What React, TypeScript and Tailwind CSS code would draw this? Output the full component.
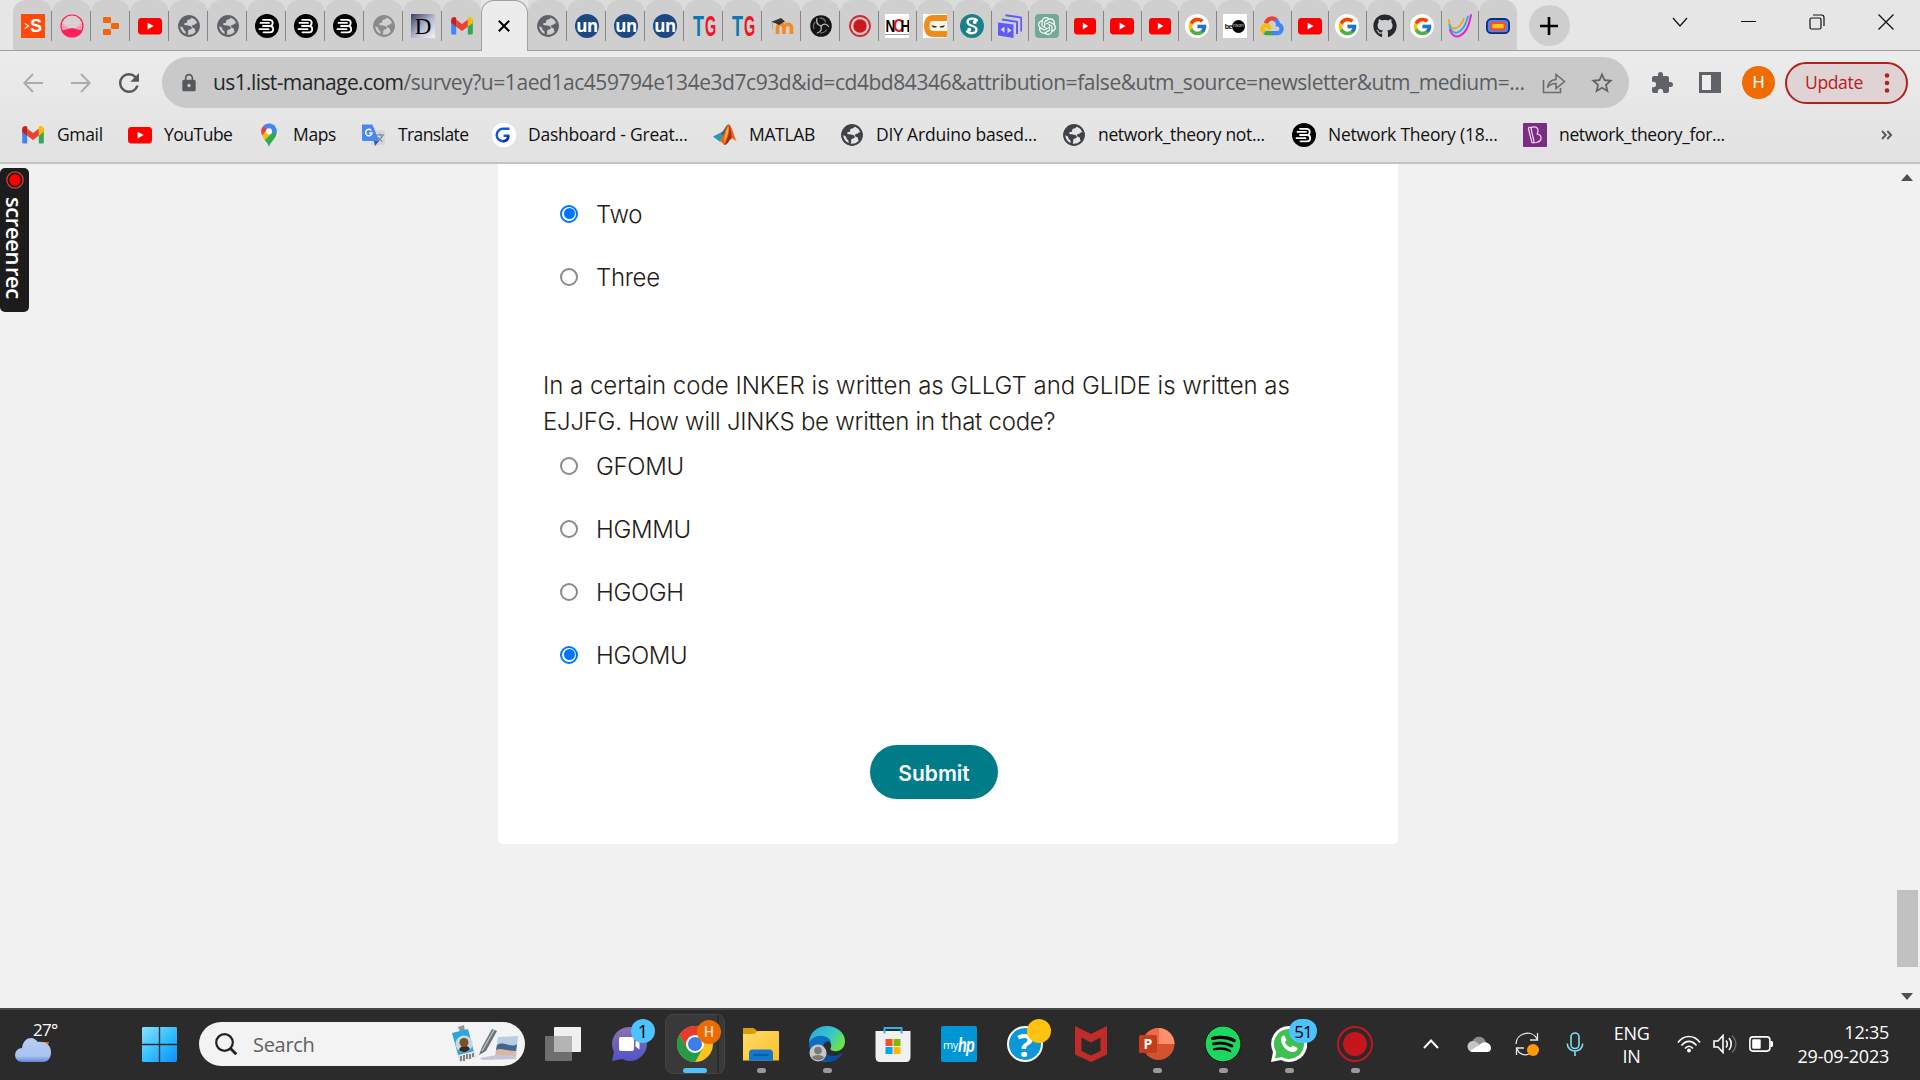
import React from 'react';
import { MdExtension, MdLock, MdRefresh, MdStarBorder } from 'react-icons/md';
import { FaGithub, FaSpotify } from 'react-icons/fa';
import { FcGoogle } from 'react-icons/fc';
import { SiOpenai } from 'react-icons/si';

const UI = "font-['Open_Sans','Noto_Sans',sans-serif]";

/* ---------- favicons ---------- */

const Gmail = () => (
  <svg viewBox="0 0 24 24" className="size-6">
    <path d="M1.200 5.500v13.700c0 .8.6 1.400 1.400 1.400h3.600V10.500z" fill="#4285f4" />
    <path d="M22.800 5.500v13.700c0 .8-.6 1.400-1.400 1.400h-3.600V10.500z" fill="#34a853" />
    <path d="M17.800 6v6.800l5-3.800V6.200c0-2.600-2.900-4-5-2.500z" fill="#fbbc04" />
    <path d="M6.200 12.800V5.600L12 10l5.800-4.400v7.200L12 17.100z" fill="#ea4335" />
    <path d="M1.200 6.200V9l5 3.800V3.700c-2.100-1.500-5-.1-5 2.500z" fill="#c5221f" />
  </svg>
);
const YouTube = ({ small = false }: { small?: boolean }) => (
  <svg viewBox="0 0 24 24" className={small ? 'h-6 w-[22px]' : 'size-6'} preserveAspectRatio="none">
    <rect x="0" y="4" width="24" height="16.400" rx="3.400" fill="#f00" />
    <path d="M9.600 8.800v6.600l6-3.300z" fill="#fff" />
  </svg>
);
const Globe = ({ color = '#5f6368', land = '#cfcfcf' }: { color?: string; land?: string }) => (
  <svg viewBox="0 0 24 24" className="size-6">
    <circle cx="12" cy="12" r="10.700" fill={color} />
    <path
      d="M14.500 2.800c.3 1.500-.8 2.500-2.400 2.700-1.800.2-2 1.100-1.900 2.100.1 1.200-.8 1.500-1.900 1.500-1.200 0-1.500 1.300-.6 2 .8.700 2.700.5 4.300.6 1.900.1 2.800.9 2.800 2.200 0 1.100-.8 1.300-1.900 1.500-1.400.2-1.700 1-1.700 2.100 0 1.400.1 2.500-1 3.300 3.400 1.300 8 .2 10-3.300-1.400.4-2.300-.4-2.200-1.800.1-1.200-.6-1.600-1.500-1.800-1.500-.4-2-1.700-1-2.600.7-.7 1.900-.3 2.500-1.100.6-.9 1.300-1 2.500-.7-1-3.200-3-5.700-6-6.700z"
      fill={land}
    />
    <path d="M2.800 12.200c.2 3.600 2.200 6.500 5.600 8 .5-1.700.2-2.900-1-3.600-1.300-.8-.6-2.300-1.600-3.100-.7-.6-1.700-1-3-1.300z" fill={land} />
    <circle cx="12" cy="12" r="9.800" fill="none" stroke={color} strokeWidth="1.900" />
  </svg>
);
const SIcon = () => (
  <div className="flex size-6 items-center justify-center bg-[#ff4a0c] text-white">
    <svg viewBox="0 0 8 10" className="h-2.5 w-1.5" fill="none" stroke="#fff" strokeWidth="1.600"><path d="M1 1.500 6 5 1 8.500" /></svg>
    <span className="font-['Liberation_Sans'] text-[18px] leading-none font-bold">S</span>
  </div>
);
const PinkBall = () => (
  <svg viewBox="0 0 24 24" className="size-6">
    <circle cx="12" cy="12" r="11" fill="#f9a3b6" />
    <path d="M1.500 9C3 4 7 1 12 1s9 3 10.500 8L12 15.500z" fill="#dad0d2" />
    <path d="M1.500 16.500 12 14l10.500 2.500C21 20.500 17 23 12 23S3 20.500 1.500 16.500z" fill="#ff2157" />
    <circle cx="12" cy="12" r="11" fill="none" stroke="#ff2157" strokeWidth="1.200" />
  </svg>
);
const Replit = () => (
  <svg viewBox="0 0 24 24" className="size-6" fill="#f5670f">
    <rect x="4" y="3" width="8" height="6" rx="1" /><rect x="12" y="9" width="8" height="6" rx="1" /><rect x="4" y="15" width="8" height="6" rx="1" />
  </svg>
);
const Bar3 = () => (
  <svg viewBox="0 0 24 24" className="size-6">
    <circle cx="12" cy="12" r="12" fill="#000" />
    <g fill="none" stroke="#fff" strokeWidth="1.800" strokeLinecap="round">
      <path d="M8 5.800h6.500c2.200 0 3.200 1.200 3.200 3 0 1.500-.8 2.800-2.200 3.200 2 .4 2.700 1.700 2.700 3.200 0 2-1.300 3.100-3.400 3.100H8.500" />
      <path d="M5.500 8.900h8.500M8 12h7M4.500 15.200h9" />
    </g>
  </svg>
);
const DSerif = () => (
  <div className="flex size-6 items-center justify-center bg-linear-to-br from-[#3b4268] via-[#b3b4ca] to-[#f6f6fa] font-['Liberation_Serif'] text-[23px] leading-none text-black">D</div>
);
const Un = () => (
  <div className="flex size-6 items-center justify-center rounded-full bg-[#1d4880] pb-0.5 font-['Open_Sans'] text-[17px] leading-none font-bold tracking-[-0.500px] text-white">un</div>
);
const TG = () => (
  <div className="flex size-6 items-center justify-center">
    <div className="flex scale-y-[1.650] gap-px font-['Liberation_Sans'] text-[18px] leading-none font-bold">
      <span className="w-[11px] text-[#0e78ac]">T</span><span className="w-2.5 origin-left scale-x-[.8] text-[#f01525]">G</span>
    </div>
  </div>
);
const Moodle = () => (
  <svg viewBox="0 0 24 24" className="size-6">
    <path d="M7.500 20v-6c0-5 6.500-5 6.500 0v6M14 14c0-5 7.500-5 7.500 0v6" fill="none" stroke="#f98012" strokeWidth="3.600" opacity=".9" />
    <path d="M1 8 11 4l4 3.500-6 3.500-4-2z" fill="#333" /><path d="M2.500 8v7" stroke="#c9a878" strokeWidth="1" />
  </svg>
);
const Obs = () => (
  <svg viewBox="0 0 24 24" className="size-6">
    <circle cx="12" cy="12" r="10.800" fill="#141414" />
    <g fill="none" stroke="#b5b5b5" strokeWidth="1.300" strokeLinecap="round">
      <path d="M8 4.500c-1 3.500.5 6.500 4 7.500" /><path d="M12 12c2.500-2.600 5.500-2.300 7.500.3" /><path d="M12 12c1 3.500-.6 6-3.700 7" />
      <path d="M11 4c2.500 0 4.800 1.500 5.500 4M17.500 16c-1.300 2-3.500 3-6 2.800M5 14.500C4 12.500 4.500 10 6 8.300" opacity=".55" />
    </g>
  </svg>
);
const RecSmall = () => (
  <svg viewBox="0 0 24 24" className="size-6"><circle cx="12" cy="12" r="10" fill="#e3c5c5" stroke="#d02a30" strokeWidth="1.800" /><circle cx="12" cy="12" r="6.700" fill="#cb181f" /></svg>
);
const Nch = () => (
  <div className="flex size-6 flex-col items-center justify-center overflow-hidden bg-white">
    <div className="flex h-[18px] items-center border-b border-gray-400 font-['Liberation_Sans'] text-[15px] leading-none font-black">
      <span className="w-2 scale-x-90 scale-y-110 text-black">N</span><span className="w-[7px] scale-y-125 text-[#e0182c]">C</span><span className="w-[9px] scale-x-90 scale-y-110 text-black">H</span>
    </div>
  </div>
);
const Ninja = () => (
  <svg viewBox="0 0 24 24" className="size-6">
    <rect width="24" height="24" fill="#fff" />
    <path d="M24 1H10C4 1 1 5 1 12s3 11 9 11h14v-6H12c-3 0-4-1.500-4-5s1-5 4-5h12z" fill="#ee8d1b" />
    <rect x="6.500" y="7" width="17.500" height="10" rx="4" fill="#fdf5e8" />
    <path d="M8.500 11.200l5.500 1.300-.8.900c-2 .6-4 0-4.700-2.200zM22 11.200l-5.500 1.300.8.900c2 .6 4 0 4.700-2.200z" fill="#222" />
  </svg>
);
const TealS = () => (
  <svg viewBox="0 0 24 24" className="size-6">
    <circle cx="12" cy="12" r="12" fill="#1c8088" />
    <path d="M17 6.300C14.500 3.500 7.500 4.200 7.500 8.300c0 4.200 9 2.700 9 7.200 0 4.200-7 4.800-9.500 2" fill="none" stroke="#fff" strokeWidth="2.300" strokeLinecap="round" />
    <circle cx="14.800" cy="8" r="2" fill="#fff" /><circle cx="9.200" cy="15.800" r="2" fill="#fff" />
  </svg>
);
const Cards = () => (
  <svg viewBox="0 0 24 24" className="size-6">
    <path d="M0 8.500 15.500 10.500V24L0 21.500z" fill="#5f5cf5" />
    <path d="M4 5.500 19 7.800V20M7.500 1.200 23.300 3.600V17.500" fill="none" stroke="#5f5cf5" strokeWidth="2" />
    <path d="M2.500 15.500 6.500 12.800v6zM13.500 16.500 9.500 13.300v6z" fill="#d9d9ef" />
  </svg>
);
const Gpt = () => (
  <div className="flex size-6 items-center justify-center rounded-[4px] bg-[#74a998]"><SiOpenai className="size-[18px] text-white" /></div>
);
const Google = () => (
  <div className="flex size-6 items-center justify-center rounded-full bg-white"><FcGoogle className="size-[21px]" /></div>
);
const Benson = () => (
  <div className="flex size-6 items-center justify-center bg-white">
    <span className="font-['Liberation_Sans'] text-[7px] leading-none font-bold tracking-[-0.500px] text-black">be</span>
    <div className="flex size-[13px] items-center justify-center overflow-hidden rounded-full bg-black font-['Liberation_Sans'] text-[5px] text-gray-300">nson</div>
  </div>
);
const Cloud = () => (
  <svg viewBox="0 0 24 24" className="size-6">
    <g fill="none" strokeWidth="4.200">
      <path d="M5.800 9.300C7.500 3.800 13.500 2.800 16.800 6.500" stroke="#ea4335" />
      <path d="M15.500 6c2 1.200 2.500 3 2.500 4.500 5 .5 4.800 8.700-.5 8.700H12" stroke="#4285f4" />
      <path d="M12.500 19.200H7c-1.300 0-2-.3-3-1" stroke="#34a853" />
      <path d="M9.800 15.500C8 9 1.500 12 2.600 16c.3 1.200.9 2 2 2.800" stroke="#fbbc04" />
    </g>
  </svg>
);
const UCurve = () => (
  <svg viewBox="0 0 24 24" className="size-6" fill="none" strokeWidth="1.900" strokeLinecap="round">
    <path d="M1 6c0 12 10 11 15-1.500" stroke="#f9a11b" /><path d="M1.500 11c1 11 13 12 18.500-8.500" stroke="#1bb0ee" /><path d="M2 16c3 11 17 9 21-15" stroke="#ee1fd0" />
  </svg>
);
const Chip = () => (
  <svg viewBox="0 0 24 24" className="size-6">
    <rect x=".9" y="5" width="22.200" height="14.200" rx="4.500" fill="#4a86f7" stroke="#0d2c6b" strokeWidth="1.800" />
    <rect x="5.300" y="8.800" width="13.400" height="6.600" rx="1.500" fill="#ffc021" stroke="#f5511e" strokeWidth="2.200" />
  </svg>
);
const MapPin = () => (
  <svg viewBox="0 0 24 24" className="size-6">
    <path d="M12 24c1-5 7.800-8.500 7.800-15.500L16 9l-8.500 8C10 19.500 11.300 21.500 12 24z" fill="#34a853" />
    <path d="M5.200 12.500c.6 1.800 1.500 3.200 2.600 4.700L16 7.500l-5.500-.5z" fill="#fbbc04" />
    <path d="M4.200 8.300c0 1.500.3 2.800 1 4.200L10.500 6 6 3.200C4.800 4.700 4.200 6.300 4.200 8.300z" fill="#ea4335" />
    <path d="M6 3.200 10.500 7 15 1C12 0 8 .5 6 3.200z" fill="#4285f4" /><path d="M15 1 9.700 7.300 15 10l4.800-1.500C19.800 5 18 2.200 15 1z" fill="#4285f4" />
    <circle cx="12" cy="8.200" r="3" fill="#fff" />
  </svg>
);
const Translate = () => (
  <svg viewBox="0 0 24 24" className="size-6 overflow-visible">
    <rect x="9" y="7" width="14" height="15" rx="1" fill="#d3d7db" />
    <path d="M14 12h8M18 10.500V12m2.500 0c-.8 3-3 5-5 6M15.500 14c1 2 3.500 4 5 4.500" stroke="#6b8594" strokeWidth="1.100" fill="none" />
    <path d="M0 1.500h10.500L17 18H1.500C.7 18 0 17.300 0 16.500z" fill="#4a87ee" /><path d="M12 18h5l-4 5z" fill="#3055b5" />
    <path d="M9.300 7.500A3.200 3.200 0 1 0 10 10H7.200" fill="none" stroke="#fff" strokeWidth="1.500" />
  </svg>
);
const GreatG = () => (
  <svg viewBox="0 0 24 24" className="size-6 overflow-visible">
    <circle cx="12" cy="12" r="12.200" fill="#fff" />
    <path d="M17.500 5.700H11a6 6 0 0 0 0 12.600c4 0 5.200-2.300 5.300-5.500H11.500" fill="none" stroke="#1558d6" strokeWidth="2.500" />
    <path d="M11 18.300c4 0 5.200-2.300 5.300-5.500" fill="none" stroke="#1530a5" strokeWidth="2.500" />
  </svg>
);
const Matlab = () => (
  <svg viewBox="0 0 24 24" className="size-6">
    <path d="M0 13.500 7 10l4 3.500-4.500 5z" fill="#2d9ab0" /><path d="M7 10c4-1 5-7 8.500-9L11 14z" fill="#4a5f78" />
    <path d="M15.500 1C13 4 12 11 6.500 18.500c2.500-.5 3.500 3 5 3.500 3.500-.5 4.500-5.500 7-6.500 1.500-.5 3.500 2 5 2.500C20.500 12 19 2.500 15.500 1z" fill="#e8641b" />
    <path d="M15.500 1c2 5 .5 12-4 21 3.500-.5 4.500-5.500 7-6.500C18.500 9 17.500 4 15.500 1z" fill="#a62a12" /><path d="M15.300 2.500c.8 5-.8 11-4.300 17 0-6 2.500-12 4.300-17z" fill="#fbb034" />
  </svg>
);
const PurpleB = () => (
  <svg viewBox="0 0 24 24" className="size-6">
    <rect width="24" height="24" rx="1" fill="#7b2d83" />
    <path d="M5.500 6c-.500-2 2-2.500 2.500-.700L11 18.500c.400 1.500-1.800 1.700-2.200.500zM8 5.300C8.500 4 12 3.300 13.500 4.500c2 1.600 1.600 4.600.500 6.500 3 .300 4.500 2.500 4 5-.500 2-2.500 3-4.500 3.500L9.500 20" fill="none" stroke="#f0d9f2" strokeWidth="1.200" strokeLinejoin="round" />
  </svg>
);

/* ---------- browser chrome ---------- */

const wideTabs = [
  <SIcon />, <PinkBall />, <Replit />, <YouTube />, <Globe />, <Globe />, <Bar3 />, <Bar3 />, <Bar3 />, <Globe color="#8a8a8a" />, <DSerif />, <Gmail />,
];
const midTabs = [<Globe />, <Un />, <Un />, <Un />, <TG />, <TG />, <Moodle />, <Obs />, <RecSmall />];
const narrowTabs = [
  <Nch />, <Ninja />, <TealS />, <Cards />, <Gpt />, <YouTube small />, <YouTube />, <YouTube small />, <Google />, <Benson />, <Cloud />, <YouTube />, <Google />,
  <FaGithub className="size-6 text-[#24292e]" />, <Google />, <UCurve />, <Chip />,
];

function Tab({ icon, narrow = false, last = false }: { icon: React.ReactNode; narrow?: boolean; last?: boolean }) {
  return (
    <div className={`${narrow ? 'w-[37.500px]' : 'w-[39px]'} flex h-[50px] shrink-0 items-start justify-center rounded-t-[13px] bg-[#cfcfcf] pt-[11px]`}>
      <div className={`flex h-[30px] w-full items-center justify-center ${narrow || last ? '' : 'pl-0.5'} ${last ? '' : 'border-r border-[#858585]'}`}>{icon}</div>
    </div>
  );
}

function TabStrip() {
  return (
    <div className="flex h-[51px] shrink-0 items-start border-b border-[#a0a0a0] bg-[#e6e6e6] pl-[13px]">
      <div className="flex rounded-tl-[13px] bg-[linear-gradient(to_bottom,#dcdcdc_0px,#dcdcdc_12px,#cfcfcf_13px)]">
        {wideTabs.map((t, i) => <Tab key={i} icon={t} last={i === 11} />)}
      </div>
      <div className="flex h-[51px] w-[47px] shrink-0 items-center justify-center rounded-t-[13px] border border-b-0 border-[#a0a0a0] bg-[#ececec] pr-px">
        <svg viewBox="0 0 12 12" className="size-3" stroke="#000" strokeWidth="2"><path d="M.8.8l10.400 10.400M11.200.8.8 11.200" /></svg>
      </div>
      <div className="flex rounded-tr-[13px] bg-[linear-gradient(to_bottom,#dcdcdc_0px,#dcdcdc_12px,#cfcfcf_13px)]">
        {midTabs.map((t, i) => <Tab key={i} icon={t} />)}
        {narrowTabs.map((t, i) => <Tab key={i} icon={t} narrow last={i === 16} />)}
      </div>
      <div className="mt-[5px] ml-3 flex size-[41px] items-center justify-center rounded-full bg-[#cecece]">
        <svg viewBox="0 0 18 18" className="size-[18px]" stroke="#000" strokeWidth="2.600"><path d="M9 0v18M0 9h18" /></svg>
      </div>
      <div className="ml-auto flex h-[43px] items-center pr-[26px]">
        <svg viewBox="0 0 16 16" className="mr-[53px] size-4" fill="none" stroke="#111" strokeWidth="1.200"><path d="M1 4l7 8 7-8" /></svg>
        <div className="mr-[53px] h-px w-[15px] bg-[#111]" />
        <svg viewBox="0 0 16 16" className="mr-[53px] size-4" fill="none" stroke="#111" strokeWidth="1.200"><rect x="1" y="4" width="11" height="11" rx="1.500" /><path d="M4 1h8.500C14 1 15 2 15 3.500V12" /></svg>
        <svg viewBox="0 0 16 16" className="size-4" stroke="#111" strokeWidth="1.300"><path d="M.5.5l15 15M15.500.5l-15 15" /></svg>
      </div>
    </div>
  );
}

const Arrow = ({ flip = false }: { flip?: boolean }) => (
  <svg viewBox="0 0 20 20" className={`size-5 ${flip ? '-scale-x-100' : ''}`} fill="none" stroke="#a9abad" strokeWidth="1.900"><path d="M20 10H1.500M10 1 1.300 10 10 19" /></svg>
);

function Toolbar() {
  return (
    <div className={`flex h-[62px] shrink-0 items-center bg-linear-to-b from-[#ececec] to-[#e6e6e6] pt-px pr-3 pl-[23px] ${UI}`}>
      <Arrow />
      <div className="ml-7"><Arrow flip /></div>
      <MdRefresh className="ml-[23px] size-[30px] text-[#55595d]" />
      <div className="ml-[18px] flex h-[51px] w-[1467px] items-center rounded-full bg-[#c9c9c9] pl-[17px]">
        <MdLock className="size-5 shrink-0 text-[#55595d]" />
        <span className="ml-3.5 w-[1326px] text-[21px] leading-none tracking-[-0.445px] whitespace-nowrap text-[#5a5d61]">
          <span className="tracking-[-0.600px] text-[#25282b]">us1.list-manage.com</span>/survey?u=1aed1ac459794e134e3d7c93d&amp;id=cd4bd84346&amp;attribution=false&amp;utm_source=newsletter&amp;utm_medium=...
        </span>
        <svg viewBox="0 0 24 24" className="ml-[3px] size-6 shrink-0" fill="none" stroke="#6a6d70" strokeWidth="1.600">
          <path d="M1.500 9v12.500h17V17" /><path d="M14 8.500V3.500l8.500 7-8.500 7v-5c-4 0-6.500 1-8.500 4 .5-4.500 3.500-7.500 8.500-8z" />
        </svg>
        <MdStarBorder className="ml-[23px] size-[26px] shrink-0 text-[#5f6368]" />
      </div>
      <MdExtension className="ml-[21px] size-6 text-[#5f6368]" />
      <svg viewBox="0 0 22 21" className="ml-[25px] h-[21px] w-[22px]"><path d="M0 0h22v21H0z" fill="#5f6368" /><path d="M3 3h9v15H3z" fill="#ececec" /></svg>
      <div className="ml-[21px] flex size-[33px] items-center justify-center rounded-full bg-[#f06c00] font-['Roboto'] text-[17px] text-white">H</div>
      <div className="ml-2.5 flex h-[42px] w-[123px] items-center rounded-full border-2 border-[#b3201f] bg-[#e0d3d3] pl-[18px] text-[17.500px] tracking-[-0.350px] text-[#b3201f]">
        Update
        <svg viewBox="0 0 6 20" className="ml-[21px] h-5 w-1.5" fill="#b3201f"><circle cx="3" cy="2.500" r="2.300" /><circle cx="3" cy="10" r="2.300" /><circle cx="3" cy="17.500" r="2.300" /></svg>
      </div>
    </div>
  );
}

const dark = { color: '#3f4347', land: '#e4e4e4' };
const bookmarks: [React.ReactNode, string, string, string][] = [
  [<Gmail />, 'Gmail', 'w-[107px]', ''],
  [<YouTube />, 'YouTube', 'w-[129px]', 'tracking-[-0.500px]'],
  [<MapPin />, 'Maps', 'w-[105px]', ''],
  [<Translate />, 'Translate', 'w-[130px]', 'tracking-[-0.600px]'],
  [<GreatG />, 'Dashboard - Great...', 'w-[221px]', 'tracking-[-0.250px]'],
  [<Matlab />, 'MATLAB', 'w-[127px]', ''],
  [<Globe {...dark} />, 'DIY Arduino based...', 'w-[222px]', 'tracking-[-0.200px]'],
  [<Globe {...dark} />, 'network_theory not...', 'w-[230px]', ''],
  [<Bar3 />, 'Network Theory (18...', 'w-[231px]', 'tracking-[-0.230px]'],
  [<PurpleB />, 'network_theory_for...', 'w-[230px]', ''],
];

function Bookmarks() {
  return (
    <div className={`flex h-[51px] shrink-0 items-center border-b-2 border-[#c4c4c4] bg-linear-to-b from-[#e6e6e6] to-[#e2e2e2] pb-[5px] pl-[21px] text-[17.500px] leading-none tracking-[-0.350px] whitespace-nowrap text-[#111] ${UI}`}>
      {bookmarks.map(([icon, label, w, tracking]) => (
        <div key={label} className={`${w} flex shrink-0 items-center gap-3`}>{icon}<span className={tracking}>{label}</span></div>
      ))}
      <svg viewBox="0 0 12 10" className="mr-[27px] ml-auto h-2.5 w-3" fill="none" stroke="#55595d" strokeWidth="1.900"><path d="M1 1l3.800 4L1 9M6.300 1l3.800 4-3.800 4" /></svg>
    </div>
  );
}

/* ---------- survey page ---------- */

function Option({ label, checked = false }: { label: string; checked?: boolean }) {
  return (
    <div className="flex h-[63px] items-center pl-[62px]">
      <span className={`flex size-[18px] items-center justify-center rounded-full border-2 bg-white ${checked ? 'border-[#0075ff]' : 'border-[#8a8a8a]'}`}>
        {checked && <span className="size-[11px] shrink-0 rounded-full bg-[#0075ff]" />}
      </span>
      <span className="ml-[18px] pt-0.5 text-[24px] leading-none tracking-[-0.350px]">{label}</span>
    </div>
  );
}

function Survey() {
  return (
    <div className="flex h-[844px] shrink-0 bg-[#f1f1f1]">
      <div className="w-[498px] shrink-0 pt-1">
        <div className="flex h-36 w-[29px] flex-col items-center rounded-[5px] bg-[#1c1c1c] pt-[3px]">
          <svg viewBox="0 0 18 18" className="size-[18px] shrink-0"><circle cx="9" cy="9" r="8.200" fill="none" stroke="#d93a3a" strokeWidth="1.300" /><circle cx="9" cy="9" r="5.700" fill="#f00" /></svg>
          <span className="mt-2 font-['Open_Sans'] text-[22px] leading-[22px] font-semibold tracking-[-0.400px] text-white [writing-mode:vertical-rl]">screen<span className="pt-0.5">rec</span></span>
        </div>
      </div>
      <div className="h-[680px] w-[900px] shrink-0 rounded-b-[5px] bg-white font-['Inter',sans-serif] font-[350] text-[#241c15]">
        <div className="pt-[18px]">
          <Option label="Two" checked />
          <Option label="Three" />
        </div>
        <p className="mt-[60px] mb-[-6px] pl-[45px] text-[24px] leading-9 tracking-[-0.040px] whitespace-nowrap">
          In a certain code INKER is written as GLLGT and GLIDE is written as<br />
          <span className="tracking-[-0.250px]">EJJFG. How will JINKS be written in that code?</span>
        </p>
        <Option label="GFOMU" />
        <Option label="HGMMU" />
        <Option label="HGOGH" />
        <Option label="HGOMU" checked />
        <button className="mt-[59px] ml-[372px] flex h-[54px] w-32 items-center justify-center rounded-full bg-[#007c89] pt-1 text-[21px] font-semibold text-white">Submit</button>
      </div>
      <div className="ml-auto flex w-[25px] flex-col items-center pt-2.5 pr-0.5 pb-2 pl-px">
        <svg viewBox="0 0 12 7" className="h-[7px] w-3"><path d="M0 7l6-7 6 7z" fill="#505050" /></svg>
        <div className="mt-auto h-[77px] w-[21px] bg-[#c1c1c1]" />
        <svg viewBox="0 0 12 7" className="mt-[26px] h-[7px] w-3"><path d="M0 0l6 7 6-7z" fill="#505050" /></svg>
      </div>
    </div>
  );
}

/* ---------- taskbar ---------- */

const SearchArt = () => (
  <svg viewBox="0 0 66 38" className="h-[38px] w-[66px]">
    <path d="M6 2l6-2 1 6-5 1z" fill="#8b96a0" />
    <path d="M0 8l16-4 7 27-15 6z" fill="#2ba5dc" /><path d="M6 30l17-4 2 6-17 6z" fill="#e3e6ea" />
    <path d="M9 31v5M12 30v6M15 29v5M18 29v5M21 28v4" stroke="#333" strokeWidth="1.100" />
    <circle cx="12" cy="19" r="8.500" fill="#c9d6dc" /><path d="M7 25c1-5 9-6 11-1-3 4-8 4-11 1z" fill="#3a2a22" /><circle cx="12" cy="17.500" r="4.500" fill="#7a4e34" />
    <path d="M46 12l20-1-2 21-21 0z" fill="#b9cde6" /><path d="M45 20c8-5 14 4 20-1l-1 7-20-1z" fill="#41678f" /><path d="M44 25c6-3 12 2 20 1l-.5 5-20-1z" fill="#d9b6a2" />
    <path d="M28 33l16-3 20 2v2L30 35z" fill="#c9c3da" />
    <path d="M40 4l5 2-11 20-7 4 3-8z" fill="#6b7377" /><path d="M42 5L30 26" stroke="#b8c0c4" strokeWidth="1.500" />
  </svg>
);

const TaskView = () => (
  <svg viewBox="0 0 36 36" className="size-9"><rect x="9" y="1" width="27" height="25" rx="1" fill="#f0f0f0" /><rect x="0" y="10" width="27" height="25" rx="1" fill="#6e6e6e" /><path d="M9 10h18v16H9z" fill="#b4b4b4" /></svg>
);
const Chat = () => (
  <svg viewBox="0 0 36 36" className="size-9">
    <defs><linearGradient id="chat" x1="0" y1="0" x2="0" y2="1"><stop offset="0" stopColor="#8d6fb0" /><stop offset="1" stopColor="#5054c8" /></linearGradient></defs>
    <path d="M18 1a17 17 0 1 1-7 32L1 35l2-9A17 17 0 0 1 18 1z" fill="url(#chat)" />
    <rect x="8" y="11" width="15" height="14" rx="2" fill="#fff" /><path d="M24.500 15.500l4-3v11l-4-3z" fill="#fff" />
  </svg>
);
const Chrome = () => (
  <svg viewBox="0 0 36 36" className="size-9">
    <circle cx="18" cy="18" r="18" fill="#fcc31e" />
    <path d="M18 0A18 18 0 0 0 2.400 9l7.800 13.500L18 9h15.600A18 18 0 0 0 18 0z" fill="#e33b2e" />
    <path d="M2.400 9A18 18 0 0 0 18 36l7.800-13.500-7.800 3-7.800-3z" fill="#259b4a" />
    <circle cx="18" cy="18" r="9" fill="#fff" /><circle cx="18" cy="18" r="7" fill="#3d7de8" />
  </svg>
);
const Folder = () => (
  <svg viewBox="0 0 36 36" className="size-9">
    <defs><linearGradient id="fold" x1="0" y1="0" x2="1" y2="1"><stop offset="0" stopColor="#ffdd6e" /><stop offset="1" stopColor="#f9bf22" /></linearGradient></defs>
    <path d="M0 3c0-.6.400-1 1-1h9.500L15 5.500V12H0z" fill="#dd9c06" /><path d="M0 8h11l4-3h20c.6 0 1 .4 1 1v28.500H0z" fill="url(#fold)" />
    <path d="M6 34.500V27c0-2 1.500-3.500 3.500-3.500h17C28.500 23.500 30 25 30 27v7.500z" fill="#1277cf" /><path d="M11 29h14" stroke="#0b4f96" strokeWidth="1.600" strokeLinecap="round" />
  </svg>
);
const Edge = () => (
  <svg viewBox="0 0 36 36" className="size-9">
    <defs><linearGradient id="edgeA" x1="0" y1="0" x2="1" y2=".5"><stop offset="0" stopColor="#27a5de" /><stop offset=".6" stopColor="#35c6cf" /><stop offset="1" stopColor="#6be24b" /></linearGradient></defs>
    <path d="M0 17C0 7 8 0 18 0s18 7 18 15-6 11-11 10c-4-.5-4-2-3-4 1-3-1-7-6-8C10 12 4 12 0 17z" fill="url(#edgeA)" />
    <path d="M0 17c2-5 8-8 14-7 5 .8 8 3.500 8 7-1-2-5-3-7 1-3 6 3 14 12 12 3-.7 5-2 6.500-3.500C30 33 24 36 18 36 8 36 0 28 0 17z" fill="#0d6fc4" />
    <path d="M15 18c-3 6 3 14 12 12 3-.7 5-2 6.500-3.500C30 33 24 36 18 36c-6-2-9-12-3-18z" fill="#0f4d9c" />
    <circle cx="9" cy="27" r="8.500" fill="#c9c7c5" /><circle cx="9" cy="24.500" r="3.800" fill="#7c7a78" /><path d="M3 31.500c1-3.500 11-3.500 12 0-3 3.500-9 3.500-12 0z" fill="#7c7a78" />
  </svg>
);
const Store = () => (
  <svg viewBox="0 0 36 36" className="size-9">
    <path d="M.5 5h35v26c0 3-1.500 5-4.500 5H5c-3 0-4.500-2-4.500-5z" fill="#f0f0f0" /><path d="M9.500 7.500V2h17v5.500" fill="none" stroke="#2fb3ea" strokeWidth="2" />
    <path d="M10.500 13h7v7h-7z" fill="#f25022" /><path d="M18.500 13h7v7h-7z" fill="#7fba00" /><path d="M10.500 21h7v7h-7z" fill="#00a4ef" /><path d="M18.500 21h7v7h-7z" fill="#ffb900" />
  </svg>
);
const MyHp = () => (
  <div className="flex size-9 items-center justify-center rounded-[2px] bg-[#0096d6] pr-0.5 text-white">
    <span className="font-['Open_Sans'] text-[11px] leading-none font-medium tracking-[-0.500px]">my</span><span className="-mr-1.5 origin-left scale-x-75 scale-y-110 font-['Liberation_Sans'] text-[19px] leading-none font-bold tracking-[-1px] italic">hp</span>
  </div>
);
const Help = () => (
  <div className="flex size-9 items-center justify-center rounded-full border-2 border-white bg-[#0d96d8] font-['Open_Sans'] text-[33px] leading-none font-bold text-white">?</div>
);
const McAfee = () => (
  <svg viewBox="0 0 36 36" className="size-9"><path d="M2 0l16 8 16-8v28.500L18 36 2 28.500z" fill="#c12b29" /><path d="M8.500 11.500L18 16.500l9.500-5V25L18 29.500 8.500 25z" fill="#2b2b2b" /></svg>
);
const Ppt = () => (
  <svg viewBox="0 0 36 36" className="size-9">
    <circle cx="19.500" cy="18" r="16" fill="#d35230" /><path d="M19.500 2a16 16 0 0 1 16 16h-16z" fill="#ff8f6b" /><path d="M19.500 2a16 16 0 0 0-16 16h16z" fill="#ed6c47" />
    <rect x="0" y="9" width="18" height="18" rx="1.500" fill="#c43e1c" /><text x="9" y="23" textAnchor="middle" fontFamily="Open Sans" fontWeight="700" fontSize="14" fill="#fff">P</text>
  </svg>
);
const Spotify = () => (
  <div className="flex size-9 items-center justify-center rounded-full bg-black"><FaSpotify className="size-9 text-[#1ed760]" /></div>
);
const WhatsApp = () => (
  <svg viewBox="0 0 36 36" className="size-9">
    <path d="M18 0a18 18 0 1 1-8 34L0 36l2-10A18 18 0 0 1 18 0z" fill="#fff" /><path d="M18 3a15 15 0 1 1-7.500 28L4 32.500 5.300 26A15 15 0 0 1 18 3z" fill="#3fbf50" />
    <path d="M10 13c0-2 2-4 3.500-3.500l2 4.500-1.500 2.500c1 2 3 4 5.500 5l2.500-2 4.500 2.500c0 3-3 4.500-5.500 4C15 25 10 19 10 13z" fill="#fff" />
  </svg>
);
const Rec = () => (
  <svg viewBox="0 0 36 36" className="size-9"><circle cx="18" cy="18" r="17" fill="none" stroke="#c4161c" strokeWidth="1.900" /><circle cx="18" cy="18" r="12" fill="#c4161c" /></svg>
);

function TaskApp({ icon, badge, run = false, active = false }: { icon: React.ReactNode; badge?: React.ReactNode; run?: boolean; active?: boolean }) {
  return (
    <div className="flex w-[66px] justify-center">
      <div className={`relative flex h-[60px] flex-col items-center ${active ? 'w-[60px] rounded-lg border border-[#444] bg-[#393939] pt-[11px]' : 'w-[54px] pt-3'}`}>
        {active && <span className="absolute inset-y-0 -right-px w-2 rounded-r-lg border-l-2 border-[#2c2c2c]" />}
        {icon}
        {badge}
        {active && <span className="mt-1.5 h-[5px] w-6 rounded-full bg-[#4cc2ff]" />}
        {run && <span className="mt-1.5 h-[5px] w-[9px] rounded-full bg-[#9a9a9a]" />}
      </div>
    </div>
  );
}

const badge = 'absolute top-[5px] flex h-6 items-center justify-center rounded-full leading-none';

function Taskbar() {
  return (
    <div className={`flex h-[72px] shrink-0 items-center border-t-2 border-[#484848] bg-[#2b2b2b] pb-0.5 ${UI}`}>
      <div className="relative ml-[15px] h-[42px] w-[127px]">
        <svg viewBox="0 0 36 24" className="mt-[15px] h-6 w-9">
          <defs><linearGradient id="cl" x1="0" y1="0" x2="0" y2="1"><stop offset="0" stopColor="#b9cdf2" /><stop offset=".75" stopColor="#a9c2f2" /><stop offset="1" stopColor="#5f86dc" /></linearGradient></defs>
          <path d="M25 4h9l-2 6z" fill="#e0691a" />
          <path d="M7 24a7 7 0 0 1 0-14C8 3 12 0 16 0c3 0 5 2 7 4 8-1 13 4 13 10s-3 10-8 10z" fill="url(#cl)" />
        </svg>
        <span className="absolute -top-0.5 left-[18px] text-[17px] leading-none tracking-[-0.700px] text-white">27°</span>
      </div>
      <svg viewBox="0 0 35 35" className="size-[35px]">
        <defs><linearGradient id="win" x1="0" y1="0" x2="1" y2="1"><stop offset="0" stopColor="#8ae0ff" /><stop offset=".5" stopColor="#35c1ff" /><stop offset="1" stopColor="#0a8cff" /></linearGradient></defs>
        <path d="M0 1.500C0 .6.600 0 1.500 0h15.300v16.800H0zM18.200 0h15.300c.9 0 1.500.6 1.500 1.500v15.300H18.200zM0 18.200h16.800V35H1.500C.6 35 0 34.400 0 33.500zM18.200 18.200H35v15.300c0 .9-.6 1.500-1.500 1.500H18.200z" fill="url(#win)" />
      </svg>
      <div className="ml-[22px] flex h-11 w-[326px] items-center rounded-full bg-[#f3f3f3] pl-4">
        <svg viewBox="0 0 22 22" className="size-[22px]" fill="none" stroke="#222" strokeWidth="2.200"><circle cx="9.500" cy="9.500" r="8.300" /><path d="M15 15l6.300 6.300" strokeWidth="2.800" /></svg>
        <span className="ml-4 pt-0.5 text-[20px] leading-none tracking-[-0.300px] text-[#606060]">Search</span>
        <div className="mr-[7px] ml-auto"><SearchArt /></div>
      </div>
      <div className="ml-[5px] flex">
        <TaskApp icon={<TaskView />} />
        <TaskApp icon={<Chat />} badge={<span className={`${badge} left-[29px] w-6 bg-[#4cc2ff] text-[18px] text-black`}>1</span>} />
        <TaskApp icon={<Chrome />} active badge={<span className={`${badge} left-[31px] w-6 bg-[#ec6b00] font-['Roboto'] text-[14px] font-medium text-[#ffdcc0]`}>H</span>} />
        <TaskApp icon={<Folder />} run />
        <TaskApp icon={<Edge />} run />
        <TaskApp icon={<Store />} />
        <TaskApp icon={<MyHp />} />
        <TaskApp icon={<Help />} badge={<span className={`${badge} left-[29px] w-6 bg-[#ffc20e]`} />} />
        <TaskApp icon={<McAfee />} />
        <TaskApp icon={<Ppt />} run />
        <TaskApp icon={<Spotify />} run />
        <TaskApp icon={<WhatsApp />} run badge={<span className={`${badge} left-[27px] w-7 bg-[#4cc2ff] text-[17px] tracking-[-1px] text-black`}>51</span>} />
        <TaskApp icon={<Rec />} run />
      </div>
      <div className="mr-[31px] ml-auto flex items-center text-[18px] leading-6 tracking-[-0.250px] text-white">
        <svg viewBox="0 0 16 10" className="h-2.5 w-4" fill="none" stroke="#fff" strokeWidth="2"><path d="M1 9l7-7.500L15 9" /></svg>
        <svg viewBox="0 0 24 16" className="ml-7 h-4 w-6"><path d="M5 6C7 0 16-2 19 6l-8 5z" fill="#8f8f8f" /><path d="M5 16c-6-1-6-10 0-11 3-.5 5 1 7 3l-4 8z" fill="#c4c4c4" /><path d="M3 15l12-8c4-2 9 1 9 5 0 2-1 4-4 4H5z" fill="#fff" /></svg>
        <svg viewBox="0 0 24 24" className="ml-6 size-6" fill="none" stroke="#e6e6e6" strokeWidth="1.300"><path d="M1 12C1 1 17-3 22 7M22.500 1v7H15M1.500 23v-7H9M2 17c2 5 7 7 12 5" /><circle cx="18" cy="18" r="6" fill="#ff9a06" stroke="none" /></svg>
        <svg viewBox="0 0 18 24" className="ml-[27px] h-6 w-[18px]" fill="none" stroke="#7fdcf5" strokeWidth="1.600"><rect x="5" y="1" width="8" height="15.500" rx="4" /><path d="M1.300 11.500c0 10 15.400 10 15.400 0M9 19v5" /></svg>
        <div className="ml-[30px] w-[36px] pt-0.5 text-center leading-[23px]">ENG<br />IN</div>
        <svg viewBox="0 0 24 18" className="ml-[27px] h-[18px] w-6" fill="none" stroke="#fff" strokeWidth="1.600"><path d="M1 7.500c6-8 16-8 22 0M4.500 10.500c4.500-5.500 10.500-5.500 15 0M8 13.500c2.500-3 5.500-3 8 0" /><circle cx="12" cy="15.500" r="1.900" fill="#fff" stroke="none" /></svg>
        <svg viewBox="0 0 24 20" className="ml-3 h-5 w-6" fill="none" stroke="#fff" strokeWidth="1.600"><path d="M1 7h4l5-5.500v17L5 13H1z" /><path d="M13 6.500c1.500 2 1.500 5 0 7M16 4c3 3.500 3 8.500 0 12" /><path d="M19 1.500c5 5 5 12 0 17" stroke="#666" /></svg>
        <svg viewBox="0 0 24 16" className="ml-3 h-4 w-6"><rect x=".900" y=".900" width="20" height="14.200" rx="3" fill="none" stroke="#fff" strokeWidth="1.600" /><rect x="3.200" y="3.200" width="8.500" height="9.600" rx="1" fill="#fff" /><path d="M21.500 5H23l1 1v4l-1 1h-1.500z" fill="#fff" /></svg>
        <div className="ml-[25px] text-right">12:35<br />29-09-2023</div>
      </div>
    </div>
  );
}

export default function App() {
  return (
    <div className="flex h-[1080px] w-[1920px] flex-col overflow-hidden bg-[#f1f1f1]">
      <TabStrip />
      <Toolbar />
      <Bookmarks />
      <Survey />
      <Taskbar />
    </div>
  );
}
